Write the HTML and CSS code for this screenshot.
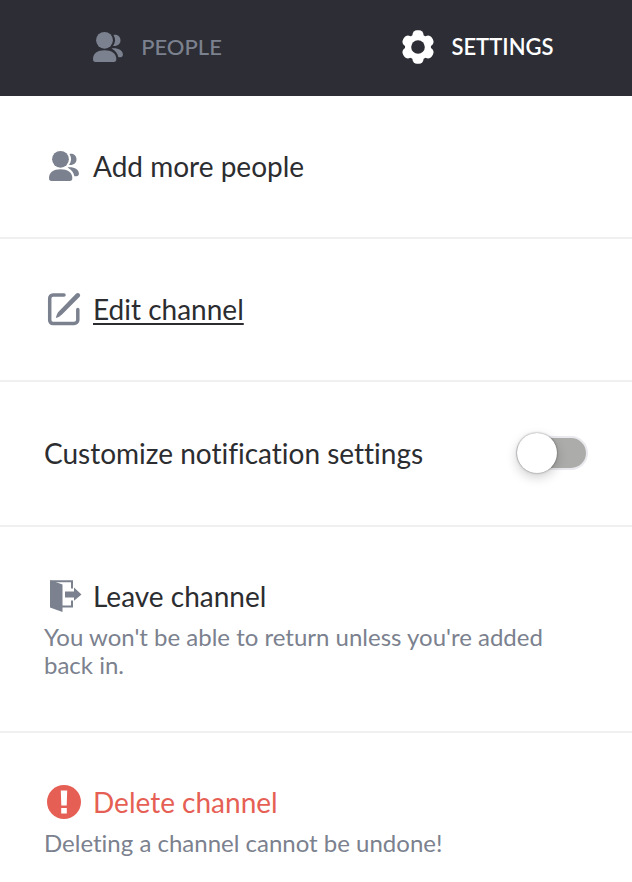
FILE: index.html
```html
<!DOCTYPE html>
<html lang="en">
<head>
  <meta charset="UTF-8" />
  <meta name="viewport" content="width=device-width, initial-scale=1.0"/>
  <title>Channel Settings</title>
  <link rel="stylesheet" href="styles.css">
</head>
<body>

  <svg class="sprite" aria-hidden="true">
    <symbol id="icon-people" viewBox="0 0 34 34">
      <circle cx="13.5" cy="10.3" r="8.4"/>
      <path d="M2 29C2 23.500 6.500 20.300 13.500 20.300S25.300 23.500 25.300 29C25.300 31.200 24.500 32 22.800 32H4.500C2.800 32 2 31.200 2 29Z"/>
      <path d="M22.500 5C27 4.200 29.500 7 29.500 10.500S26.500 16.500 22 15.900C24.600 12.500 24.800 8.400 22.500 5Z"/>
      <path d="M20.500 18.400C27.500 17.800 31.900 20.500 31.900 24.500C31.900 26.500 31 27.200 29.500 27.200H27.400C26.500 23.300 24.600 20.500 20.500 18.400Z"/>
    </symbol>
  </svg>

  <nav class="tabs">
    <button class="tab" type="button">
      <svg class="icon" aria-hidden="true"><use href="#icon-people"/></svg>
      PEOPLE
    </button>
    <button class="tab active" type="button">
      <svg class="icon" viewBox="0 0 34 34" aria-hidden="true">
        <circle cx="17" cy="17" r="13"/>
        <rect x="11.500" y="0.300" width="11" height="33.400" rx="4.500"/>
        <rect x="11.500" y="0.300" width="11" height="33.400" rx="4.500" transform="rotate(60 17 17)"/>
        <rect x="11.500" y="0.300" width="11" height="33.400" rx="4.500" transform="rotate(120 17 17)"/>
        <circle class="hole" cx="17" cy="17" r="6.800"/>
      </svg>
      SETTINGS
    </button>
  </nav>

  <main>
    <section class="row">
      <button class="action" type="button">
        <svg class="icon" aria-hidden="true"><use href="#icon-people"/></svg>
        <span>Add more people</span>
      </button>
    </section>

    <section class="row">
      <a class="action link" href="#edit">
        <svg class="icon" viewBox="0 0 34 34" aria-hidden="true">
          <path class="line" d="M17 3H6C4 3 2.700 4.500 2.700 6.500V28C2.700 30 4 31.500 6 31.500H27C29 31.500 30.800 30 30.800 28V17.500"/>
          <path d="M29 1.700C30.200 .6 31.600 .8 32.500 1.700S33.400 4 32.400 5.100L15 22.500C13.500 24 11 25.500 8.800 26C9.300 23.500 10.500 20.700 12 19.200Z"/>
        </svg>
        <span>Edit channel</span>
      </a>
    </section>

    <section class="row setting">
      <label for="customize">Customize notification settings</label>
      <input class="toggle" type="checkbox" role="switch" id="customize">
    </section>

    <section class="row tall">
      <button class="action" type="button">
        <svg class="icon" viewBox="0 0 34 34" aria-hidden="true">
          <path d="M3 1L15.500 5.500V33L3 28.500Z"/>
          <path class="thin" d="M4 2.200H25V9.500M25 21.500V27.500H15"/>
          <path d="M18 12.500H27V8.500L34.500 15.500L27 21.800V18.500H18Z"/>
        </svg>
        <span>Leave channel</span>
      </button>
      <p class="hint">You won't be able to return unless you're added back in.</p>
    </section>

    <section class="row tall">
      <button class="action danger" type="button">
        <svg class="icon" viewBox="0 0 34 34" aria-hidden="true">
          <circle cx="17" cy="17" r="17"/>
          <path class="mark" d="M13.800 5.500H20.200L19.700 20.500H14.300ZM14.200 23H19.800V28.500H14.200Z"/>
        </svg>
        <span>Delete channel</span>
      </button>
      <p class="hint">Deleting a channel cannot be undone!</p>
    </section>
  </main>

</body>
</html>
```
FILE: styles.css
```css
* {
  box-sizing: border-box;
}

body {
  margin: 0;
  background: #ffffff;
  color: #2c2d30;
  font-family: Lato, "Liberation Sans", sans-serif;
  font-size: 28px;
  line-height: 36px;
  font-variant-ligatures: none;
}

button {
  padding: 0;
  border: none;
  background: none;
  font: inherit;
  font-variant-ligatures: none;
  color: inherit;
  cursor: pointer;
}

.sprite {
  position: absolute;
  width: 0;
  height: 0;
}

.icon {
  flex: none;
  width: 34px;
  height: 34px;
  fill: #7b818e;
  overflow: visible;
}

.icon .line {
  fill: none;
  stroke: #7b818e;
  stroke-width: 3.5;
  stroke-linecap: round;
}

.icon .thin {
  fill: none;
  stroke: #7b818e;
  stroke-width: 2;
}

.tabs {
  display: flex;
  gap: 12px;
  padding-left: 2px;
  background: #2c2d35;
}

.tab {
  flex: 1;
  display: flex;
  align-items: center;
  justify-content: center;
  gap: 16px;
  height: 96px;
  padding-bottom: 2px;
  color: #7b818e;
  font-size: 22px;
  font-weight: 500;
}

.tab.active {
  color: #ffffff;
  font-weight: 600;
}

.tab.active .icon {
  fill: #ffffff;
}

.tab.active .hole {
  fill: #2c2d35;
}

.row {
  padding: 52px 44px 53px;
  border-bottom: 2px solid #f0f0f0;
}

.row:last-child {
  border-bottom: none;
}

.row.tall {
  padding: 51px 44px 52px;
}

.action {
  display: flex;
  align-items: center;
  gap: 12px;
  padding-left: 3px;
}

.link {
  color: inherit;
  text-decoration: none;
}

.link span {
  text-decoration: underline;
  text-decoration-thickness: 2px;
  text-underline-offset: 3px;
}

.danger {
  color: #e65f55;
}

.danger .icon {
  fill: #e65f55;
}

.danger .mark {
  fill: #ffffff;
}

.setting {
  display: flex;
  align-items: center;
  justify-content: space-between;
}

.toggle {
  appearance: none;
  position: relative;
  width: 72px;
  height: 34px;
  margin: 2px 0;
  border: 2px solid #e9e9ee;
  border-radius: 17px;
  background: #acacaa;
  cursor: pointer;
}

.toggle::before {
  content: "";
  position: absolute;
  top: -5px;
  left: -1px;
  width: 40px;
  height: 40px;
  border-radius: 50%;
  background: #ffffff;
  box-shadow: 0 0 2px rgba(0,0,0,0.5), 0 4px 12px rgba(0,0,0,0.2);
}

.toggle:checked::before {
  left: 31px;
}

.hint {
  margin: 9px 0 0;
  color: #7b818e;
  font-size: 24px;
  line-height: 28px;
}
```
